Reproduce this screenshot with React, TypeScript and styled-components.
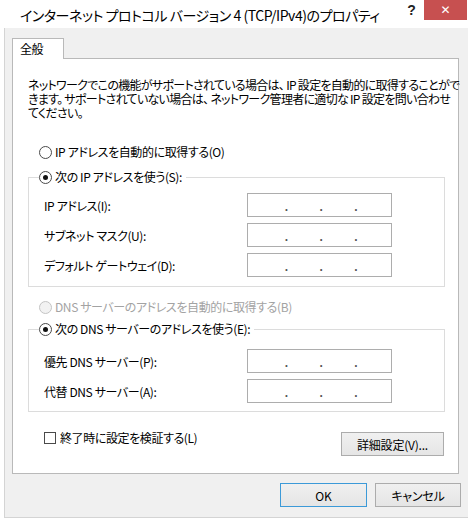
import React from "react";
import styled, { createGlobalStyle } from "styled-components";

const Global = createGlobalStyle`
  html, body { margin: 0; padding: 0; background: #ffffff; overflow: hidden; }
  body {
    font-family: "Noto Sans CJK JP", "Noto Sans", sans-serif;
    font-size: 12px;
    color: #000;
    font-feature-settings: "palt" 1;
    letter-spacing: -0.4px;
  }
  * { box-sizing: border-box; }
`;

const Window = styled.div`
  position: relative;
  width: 468px;
  height: 519px;
  display: flex;
  flex-direction: column;
  background: #ffffff;
`;

const TitleBar = styled.div`
  position: relative;
  height: 28px;
  flex-shrink: 0;
  display: flex;
  align-items: flex-start;
`;

const Title = styled.div`
  padding-left: 20px;
  font-size: 14px;
  letter-spacing: -0.45px;
  line-height: 30px;
  white-space: nowrap;
`;

const HelpButton = styled.div`
  position: absolute;
  top: 0;
  right: 43px;
  width: 27px;
  height: 20px;
  display: flex;
  align-items: center;
  justify-content: center;
  font-family: "Liberation Sans", sans-serif;
  font-weight: bold;
  font-size: 14px;
  letter-spacing: 0;
  color: #222;
`;

const CloseButton = styled.div`
  position: absolute;
  top: 0;
  right: 1px;
  z-index: 10;
  width: 43px;
  height: 20px;
  background: #c75050;
  color: #ffffff;
  font-family: "DejaVu Sans", sans-serif;
  font-size: 12px;
  font-weight: bold;
  letter-spacing: 0;
  line-height: 20px;
  text-align: center;
`;

const Client = styled.div`
  margin-left: 4px;
  width: 464px;
  height: 490px;
  background: #f0f0f0;
  border-left: 1px solid #d4d4d4;
  border-bottom: 1px solid #d4d4d4;
  padding: 10px 7px 0 7px;
  display: flex;
  flex-direction: column;
`;

const TabStrip = styled.div`
  display: flex;
  position: relative;
  z-index: 1;
  margin-bottom: -1px;
`;

const Tab = styled.div`
  width: 52px;
  height: 21px;
  background: #ffffff;
  border: 1px solid #b9b9b9;
  border-bottom: none;
  padding-left: 7px;
  line-height: 20px;
`;

const Panel = styled.div`
  width: 447px;
  height: 416px;
  background: #ffffff;
  border: 1px solid #b9b9b9;
  padding: 19px 13px 0 15px;
  display: flex;
  flex-direction: column;
`;

const Description = styled.div`
  display: flex;
  flex-direction: column;
  letter-spacing: -0.7px;
`;

const DescLine = styled.span`
  height: 14px;
  line-height: 14px;
  white-space: nowrap;
`;

const OptionRow = styled.label<{ $top: number; $disabled?: boolean }>`
  display: flex;
  align-items: center;
  gap: 3px;
  height: 18px;
  line-height: 18px;
  margin-top: ${(p) => p.$top}px;
  padding-left: 11px;
  color: ${(p) => (p.$disabled ? "#a3a3a3" : "#000")};
  white-space: nowrap;
`;

const Radio = styled.span<{ $checked?: boolean; $disabled?: boolean }>`
  width: 13px;
  height: 13px;
  flex-shrink: 0;
  border-radius: 50%;
  border: 1px solid ${(p) => (p.$disabled ? "#c4c4c4" : "#4a4a4a")};
  background: ${(p) => (p.$disabled ? "#f2f2f2" : "#fff")};
  display: flex;
  align-items: center;
  justify-content: center;
  &::after {
    content: "";
    width: 5px;
    height: 5px;
    border-radius: 50%;
    background: #111;
    display: ${(p) => (p.$checked ? "block" : "none")};
  }
`;

const GroupBox = styled.fieldset<{ $top: number; $inner: number; $bottom: number }>`
  margin: ${(p) => p.$top}px 0 0 0;
  padding: ${(p) => p.$inner}px 0 ${(p) => p.$bottom}px 10px;
  border: 1px solid #dcdcdc;
  min-width: 0;
  display: flex;
  flex-direction: column;
  gap: 6px;
`;

const Legend = styled.legend`
  padding: 0 4px 0 0;
  display: flex;
  align-items: center;
  gap: 3px;
  height: 18px;
  line-height: 18px;
  white-space: nowrap;
`;

const FieldRow = styled.div`
  display: flex;
  align-items: center;
  padding-left: 5px;
  height: 24px;
`;

const FieldLabel = styled.span`
  width: 203px;
  white-space: nowrap;
`;

const IpBox = styled.div`
  width: 145px;
  height: 24px;
  border: 1px solid #adadad;
  background: #fff;
  display: flex;
  align-items: center;
  padding: 0 2px 0 5px;
`;

const Octet = styled.span`
  flex: 1;
`;

const Dot = styled.span`
  width: 3px;
  text-align: center;
  font-family: "Liberation Sans", sans-serif;
  font-size: 12px;
  font-weight: bold;
  letter-spacing: 0;
  color: #555;
  line-height: 12px;
  padding-top: 3px;
`;

const Footer = styled.div`
  display: flex;
  justify-content: space-between;
  align-items: flex-start;
  margin-top: 20px;
  padding-left: 16px;
  padding-right: 1px;
`;

const CheckRow = styled.label`
  display: flex;
  align-items: center;
  gap: 4px;
  height: 18px;
  line-height: 18px;
  margin-top: -3px;
  white-space: nowrap;
`;

const CheckBox = styled.span`
  width: 12px;
  height: 12px;
  border: 1px solid #4a4a4a;
  background: #fff;
  flex-shrink: 0;
`;

const Button = styled.button<{ $w: number; $default?: boolean }>`
  width: ${(p) => p.$w}px;
  height: 24px;
  margin: 0;
  padding: 0;
  font: inherit;
  font-size: 12px;
  letter-spacing: -0.2px;
  color: #000;
  background: linear-gradient(#f0f0f0, #e5e5e5);
  border: 1px solid ${(p) => (p.$default ? "#3c9ad8" : "#acacac")};
  border-radius: 0;
`;

const DialogButtons = styled.div`
  display: flex;
  justify-content: flex-end;
  gap: 8px;
  margin-top: 9px;
`;

const IpField: React.FC = () => (
  <IpBox>
    <Octet />
    <Dot>.</Dot>
    <Octet />
    <Dot>.</Dot>
    <Octet />
    <Dot>.</Dot>
    <Octet />
  </IpBox>
);

export default function App() {
  return (
    <Window>
      <Global />
      <TitleBar>
        <Title>インターネット プロトコル バージョン 4 (TCP/IPv4)のプロパティ</Title>
        <HelpButton>?</HelpButton>
        <CloseButton>✕</CloseButton>
      </TitleBar>
      <Client>
        <TabStrip>
          <Tab>全般</Tab>
        </TabStrip>
        <Panel>
          <Description>
            <DescLine>ネットワークでこの機能がサポートされている場合は、 IP 設定を自動的に取得することがで</DescLine>
            <DescLine>きます。 サポートされていない場合は、 ネットワーク管理者に適切な IP 設定を問い合わせ</DescLine>
            <DescLine>てください。</DescLine>
          </Description>
          <OptionRow $top={23}>
            <Radio />
            IP アドレスを自動的に取得する(O)
          </OptionRow>
          <GroupBox $top={7} $inner={7} $bottom={9}>
            <Legend>
              <Radio $checked />
              次の IP アドレスを使う(S):
            </Legend>
            <FieldRow>
              <FieldLabel>IP アドレス(I):</FieldLabel>
              <IpField />
            </FieldRow>
            <FieldRow>
              <FieldLabel>サブネット マスク(U):</FieldLabel>
              <IpField />
            </FieldRow>
            <FieldRow>
              <FieldLabel>デフォルト ゲートウェイ(D):</FieldLabel>
              <IpField />
            </FieldRow>
          </GroupBox>
          <OptionRow $top={11} $disabled>
            <Radio $disabled />
            DNS サーバーのアドレスを自動的に取得する(B)
          </OptionRow>
          <GroupBox $top={4} $inner={11} $bottom={8}>
            <Legend>
              <Radio $checked />
              次の DNS サーバーのアドレスを使う(E):
            </Legend>
            <FieldRow>
              <FieldLabel>優先 DNS サーバー(P):</FieldLabel>
              <IpField />
            </FieldRow>
            <FieldRow>
              <FieldLabel>代替 DNS サーバー(A):</FieldLabel>
              <IpField />
            </FieldRow>
          </GroupBox>
          <Footer>
            <CheckRow>
              <CheckBox />
              終了時に設定を検証する(L)
            </CheckRow>
            <Button $w={103}>詳細設定(V)...</Button>
          </Footer>
        </Panel>
        <DialogButtons>
          <Button $w={87} $default>
            OK
          </Button>
          <Button $w={86}>キャンセル</Button>
        </DialogButtons>
      </Client>
    </Window>
  );
}
